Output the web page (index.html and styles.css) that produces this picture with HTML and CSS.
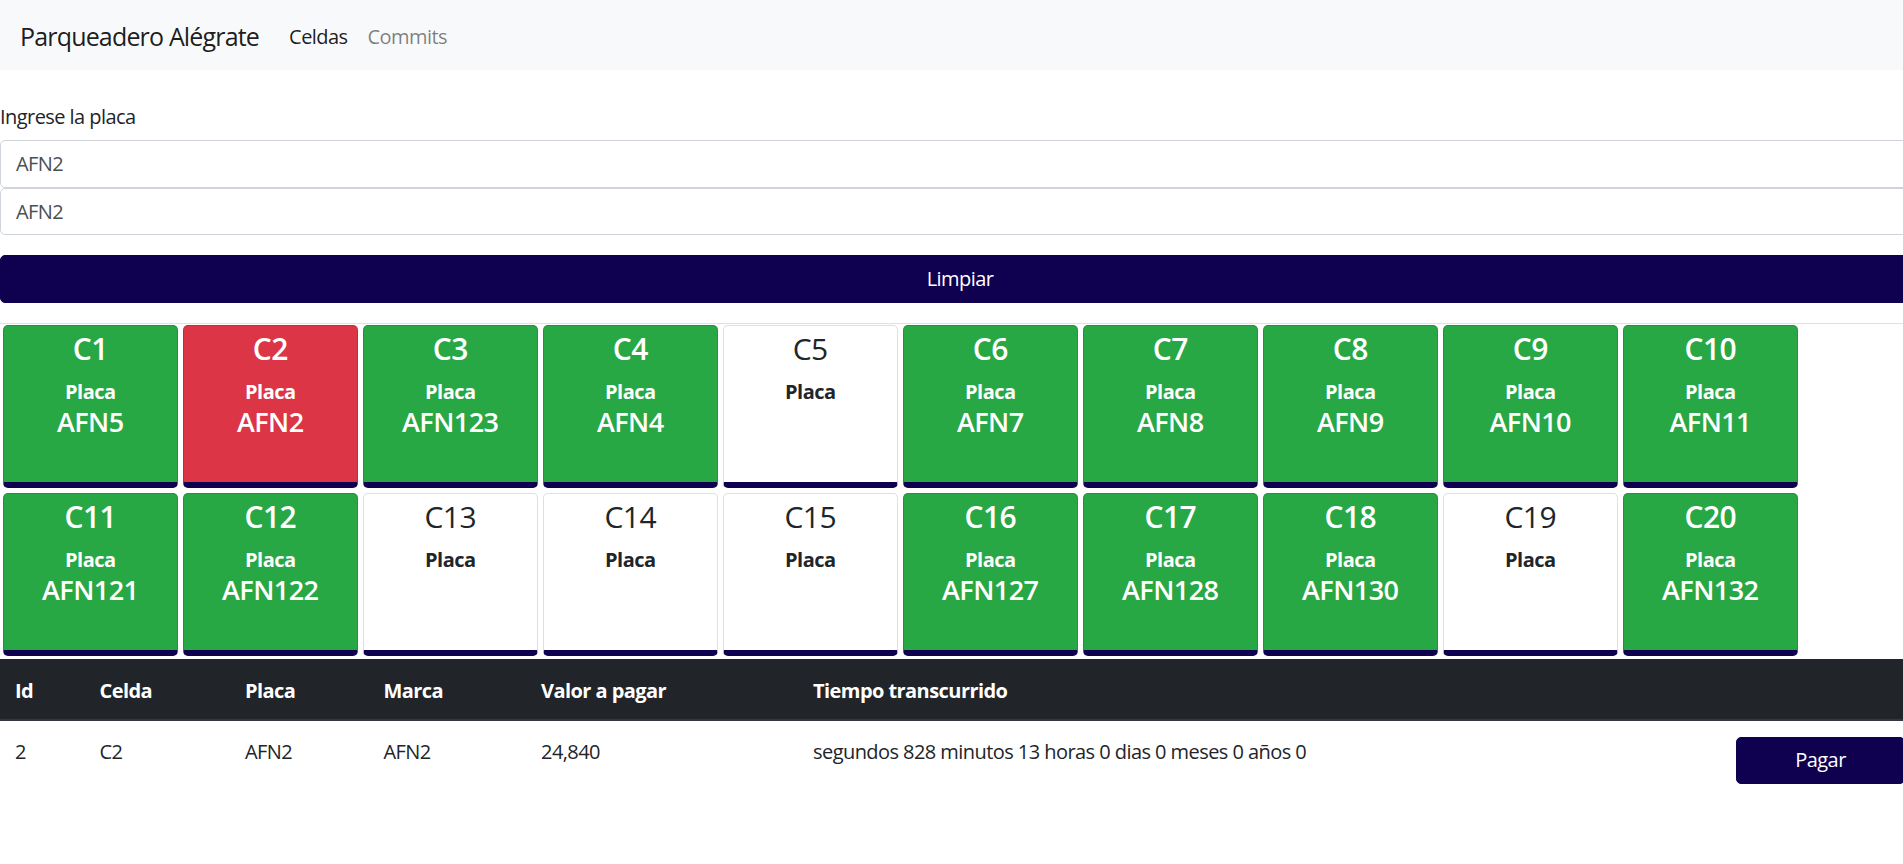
FILE: index.html
```html
<!DOCTYPE html>
<html lang="es">
<head>
<meta charset="utf-8">
<title>Parqueadero Alégrate</title>
<link rel="stylesheet" href="styles.css">
</head>
<body>
<div class="page">
  <nav class="navbar">
    <span class="brand">Parqueadero Alégrate</span>
    <a class="nav-link active">Celdas</a>
    <a class="nav-link">Commits</a>
  </nav>

  <main class="content">
    <div class="form-group">
      <label class="label">Ingrese la placa</label>
      <input class="input" type="text" value="AFN2">
      <input class="input" type="text" value="AFN2">
    </div>
    <button class="btn btn-block">Limpiar</button>

    <div class="cells">
      <div class="grid">
        <div class="cell busy"><div class="cell-title">C1</div><div class="cell-label">Placa</div><div class="cell-plate">AFN5</div></div>
        <div class="cell taken"><div class="cell-title">C2</div><div class="cell-label">Placa</div><div class="cell-plate">AFN2</div></div>
        <div class="cell busy"><div class="cell-title">C3</div><div class="cell-label">Placa</div><div class="cell-plate">AFN123</div></div>
        <div class="cell busy"><div class="cell-title">C4</div><div class="cell-label">Placa</div><div class="cell-plate">AFN4</div></div>
        <div class="cell free"><div class="cell-title">C5</div><div class="cell-label">Placa</div><div class="cell-plate"></div></div>
        <div class="cell busy"><div class="cell-title">C6</div><div class="cell-label">Placa</div><div class="cell-plate">AFN7</div></div>
        <div class="cell busy"><div class="cell-title">C7</div><div class="cell-label">Placa</div><div class="cell-plate">AFN8</div></div>
        <div class="cell busy"><div class="cell-title">C8</div><div class="cell-label">Placa</div><div class="cell-plate">AFN9</div></div>
        <div class="cell busy"><div class="cell-title">C9</div><div class="cell-label">Placa</div><div class="cell-plate">AFN10</div></div>
        <div class="cell busy"><div class="cell-title">C10</div><div class="cell-label">Placa</div><div class="cell-plate">AFN11</div></div>
        <div class="cell busy"><div class="cell-title">C11</div><div class="cell-label">Placa</div><div class="cell-plate">AFN121</div></div>
        <div class="cell busy"><div class="cell-title">C12</div><div class="cell-label">Placa</div><div class="cell-plate">AFN122</div></div>
        <div class="cell free"><div class="cell-title">C13</div><div class="cell-label">Placa</div><div class="cell-plate"></div></div>
        <div class="cell free"><div class="cell-title">C14</div><div class="cell-label">Placa</div><div class="cell-plate"></div></div>
        <div class="cell free"><div class="cell-title">C15</div><div class="cell-label">Placa</div><div class="cell-plate"></div></div>
        <div class="cell busy"><div class="cell-title">C16</div><div class="cell-label">Placa</div><div class="cell-plate">AFN127</div></div>
        <div class="cell busy"><div class="cell-title">C17</div><div class="cell-label">Placa</div><div class="cell-plate">AFN128</div></div>
        <div class="cell busy"><div class="cell-title">C18</div><div class="cell-label">Placa</div><div class="cell-plate">AFN130</div></div>
        <div class="cell free"><div class="cell-title">C19</div><div class="cell-label">Placa</div><div class="cell-plate"></div></div>
        <div class="cell busy"><div class="cell-title">C20</div><div class="cell-label">Placa</div><div class="cell-plate">AFN132</div></div>
      </div>
    </div>

    <table class="table">
      <colgroup>
        <col class="c-id"><col class="c-celda"><col class="c-placa"><col class="c-marca"><col class="c-valor"><col class="c-tiempo"><col class="c-accion">
      </colgroup>
      <thead>
        <tr>
          <th>Id</th><th>Celda</th><th>Placa</th><th>Marca</th><th>Valor a pagar</th><th>Tiempo transcurrido</th><th></th>
        </tr>
      </thead>
      <tbody>
        <tr>
          <td>2</td><td>C2</td><td>AFN2</td><td>AFN2</td><td>24,840</td>
          <td>segundos 828 minutos 13 horas 0 dias 0 meses 0 años 0</td>
          <td><button class="btn btn-full">Pagar</button></td>
        </tr>
      </tbody>
    </table>
  </main>
</div>
</body>
</html>
```

FILE: styles.css
```css
html, body {
  margin: 0;
  padding: 0;
  overflow: hidden;
  background: #fff;
}

body {
  font-family: "Open Sans", "Noto Sans", "Liberation Sans", sans-serif;
  font-size: 20px;
  line-height: 1.5;
  letter-spacing: -0.028em;
  color: #212529;
}

.page {
  width: 1920px;
}

.navbar {
  display: flex;
  align-items: center;
  height: 70px;
  padding: 3px 20px 0;
  box-sizing: border-box;
  background: #f8f9fa;
}

.brand {
  font-size: 25px;
  letter-spacing: -0.033em;
  color: rgba(0, 0, 0, 0.9);
  margin-right: 20px;
}

.nav-link {
  padding: 0 10px;
  color: rgba(0, 0, 0, 0.5);
  text-decoration: none;
}

.nav-link.active {
  color: rgba(0, 0, 0, 0.9);
}

.content {
  padding-top: 32px;
}

.form-group {
  display: flex;
  flex-direction: column;
  margin-bottom: 20px;
}

.label {
  margin-bottom: 8px;
}

.input {
  display: block;
  width: 100%;
  box-sizing: border-box;
  height: 47.5px;
  padding: 7.5px 15px;
  font: inherit;
  letter-spacing: inherit;
  color: #495057;
  background: #fff;
  border: 1px solid #ced4da;
  border-radius: 5px;
}

.btn {
  font: inherit;
  letter-spacing: inherit;
  color: #fff;
  background: #0f0050;
  border: 1px solid #0f0050;
  border-radius: 5px;
  height: 47.5px;
  padding: 7.5px 15px;
  box-sizing: border-box;
}

.btn-block {
  display: block;
  width: 100%;
  margin-bottom: 20px;
}

.btn-full {
  display: block;
  width: 100%;
}

.cells {
  border-top: 1px solid #dee2e6;
  padding: 1.5px 0 3px 3px;
}

.grid {
  display: grid;
  grid-template-columns: repeat(10, 174.5px);
  column-gap: 5.5px;
  row-gap: 4.5px;
}

.cell {
  height: 163px;
  box-sizing: border-box;
  border: 1px solid rgba(0, 0, 0, 0.125);
  border-bottom: 6px solid #0f0050;
  border-radius: 5px;
  padding-top: 5px;
  text-align: center;
}

.cell.busy {
  background: #28a745;
  color: #fff;
}

.cell.taken {
  background: #dc3545;
  color: #fff;
}

.cell.free {
  background: #fff;
  color: #212529;
}

.cell-title {
  font-size: 30px;
  line-height: 1.2;
  font-weight: 500;
  margin-bottom: 10px;
}

.cell-label {
  font-weight: 700;
  line-height: 30px;
}

.cell-plate {
  font-size: 27px;
  line-height: 30px;
  font-weight: 600;
}

.busy .cell-title,
.taken .cell-title {
  font-weight: 600;
}

.table {
  width: 1920px;
  table-layout: fixed;
  border-collapse: collapse;
}

.c-id { width: 84.5px; }
.c-celda { width: 145.5px; }
.c-placa { width: 138.5px; }
.c-marca { width: 157.5px; }
.c-valor { width: 272px; }
.c-tiempo { width: 923px; }
.c-accion { width: 199px; }

.table th,
.table td {
  text-align: left;
  vertical-align: top;
}

.table th {
  padding: 17px 15px 13px;
  background: #212529;
  color: #fff;
  font-weight: 700;
  border-bottom: 2px solid #32383e;
}

.table td {
  padding: 16px 15px 14px;
  border-top: 1px solid #dee2e6;
}
```
